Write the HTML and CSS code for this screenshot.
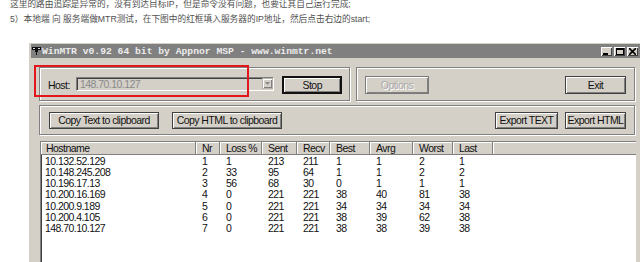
FILE: index.html
```html
<!DOCTYPE html>
<html lang="zh">
<head>
<meta charset="utf-8">
<link rel="stylesheet" href="styles.css">
</head>
<body>
<div class="intro">
  <p class="l1">这里的路由追踪是异常的，没有到达目标IP，但是命令没有问题，也要让其自己运行完成;</p>
  <p class="l2">5）本地端 向 服务端做MTR测试，在下图中的红框填入服务器的IP地址，然后点击右边的start;</p>
</div>
<div class="win">
  <div class="titlebar">
    <svg class="appicon" width="9" height="10" viewBox="0 0 9 10"><path d="M0 1h9v3H6v2H5v3H4V6H3V4H0z" fill="#111"/><path d="M1 2h2v1H1zM6 2h2v1H6z" fill="#ddd"/></svg>
    <span class="title">WinMTR v0.92 64 bit by Appnor MSP - www.winmtr.net</span>
    <div class="tbtns">
      <span class="tbtn"><svg width="7" height="7" viewBox="0 0 7 7"><path d="M0 5h5v2H0z" fill="#000"/></svg></span>
      <span class="tbtn"><svg width="8" height="7" viewBox="0 0 8 7"><path d="M0 0h8v7H0zM1 2v4h6V2z" fill="#000" fill-rule="evenodd"/></svg></span>
      <span class="tbtn close"><svg width="7" height="7" viewBox="0 0 7 7"><path d="M0 0L7 7M7 0L0 7" stroke="#000" stroke-width="1.6"/></svg></span>
    </div>
  </div>
  <div class="client">
    <div class="row1">
      <div class="group g1">
        <span class="hostlbl">Host:</span>
        <div class="combo"><span class="comboval">148.70.10.127</span><span class="arrow"><svg width="5" height="3" viewBox="0 0 5 3"><path d="M0 0h5L2.5 3z" fill="#888"/></svg></span></div>
        <button class="btn default stop">Stop</button>
      </div>
      <div class="group g2">
        <button class="btn disabled opt">Options</button>
        <button class="btn exit">Exit</button>
      </div>
    </div>
    <div class="group g3">
      <button class="btn copyt">Copy Text to clipboard</button>
      <button class="btn copyh">Copy HTML to clipboard</button>
      <span class="spacer"></span>
      <button class="btn expt">Export TEXT</button>
      <button class="btn exph">Export HTML</button>
    </div>
    <div class="list">
      <div class="hdr">
        <span class="hc first">Hostname</span><span class="hc">Nr</span><span class="hc">Loss %</span><span class="hc">Sent</span><span class="hc">Recv</span><span class="hc">Best</span><span class="hc">Avrg</span><span class="hc">Worst</span><span class="hc">Last</span><span class="hc rest"></span>
      </div>
      <div class="rows">
        <div class="r"><span class="first">10.132.52.129</span><span>1</span><span>1</span><span>213</span><span>211</span><span>1</span><span>1</span><span>2</span><span>1</span></div>
        <div class="r"><span class="first">10.148.245.208</span><span>2</span><span>33</span><span>95</span><span>64</span><span>1</span><span>1</span><span>2</span><span>2</span></div>
        <div class="r"><span class="first">10.196.17.13</span><span>3</span><span>56</span><span>68</span><span>30</span><span>0</span><span>1</span><span>1</span><span>1</span></div>
        <div class="r"><span class="first">10.200.16.169</span><span>4</span><span>0</span><span>221</span><span>221</span><span>38</span><span>40</span><span>81</span><span>38</span></div>
        <div class="r"><span class="first">10.200.9.189</span><span>5</span><span>0</span><span>221</span><span>221</span><span>34</span><span>34</span><span>34</span><span>34</span></div>
        <div class="r"><span class="first">10.200.4.105</span><span>6</span><span>0</span><span>221</span><span>221</span><span>38</span><span>39</span><span>62</span><span>38</span></div>
        <div class="r"><span class="first">148.70.10.127</span><span>7</span><span>0</span><span>221</span><span>221</span><span>38</span><span>38</span><span>39</span><span>38</span></div>
      </div>
    </div>
  </div>
  <div class="redmark"></div>
</div>
</body>
</html>
```
FILE: styles.css
```css
* { box-sizing: border-box; }
html, body { margin: 0; padding: 0; background: #fff; overflow: hidden; }
body { width: 640px; height: 262px; font-family: "Liberation Sans", Arial, sans-serif; }

.intro { padding-left: 10px; color: #505050; font-family: "Liberation Sans", "Noto Sans CJK SC", sans-serif; font-size: 8.7px; }
.intro p { margin: 0; line-height: 12px; white-space: nowrap; }
.intro .l1 { margin-top: -2px; }
.intro .l2 { margin-top: 2.5px; }

.win {
  position: relative;
  margin-top: 17.5px;
  margin-left: 28px;
  width: 616px;
  height: 230px;
  background: #d4d0c8;
  padding: 2px 3px 0 3px;
  box-shadow: inset 1px 1px #fff;
  font-size: 10.5px;
  letter-spacing: -0.55px;
  color: #111;
}

.titlebar {
  display: flex;
  align-items: center;
  height: 14px;
  background: #808080;
  padding-left: 1px;
}
.appicon { flex: none; }
.title {
  margin-left: 1px;
  font-family: "Liberation Mono", "DejaVu Sans Mono", monospace;
  font-weight: bold;
  font-size: 9.7px;
  letter-spacing: 0;
  color: #ececec;
  white-space: nowrap;
}
.tbtns { margin-left: auto; margin-right: 3px; display: flex; gap: 2px; }
.tbtn {
  width: 11px; height: 9px;
  background: #d4d0c8;
  display: flex; align-items: center; justify-content: center;
  box-shadow: inset 1px 1px #fff, inset -1px -1px #404040;
}
.tbtn svg { display: block; }

.client { padding: 9px 3px 0 8px; }
.row1 { display: flex; gap: 6px; }

.group {
  height: 34px;
  border: 1px solid #808080;
  box-shadow: inset 1px 1px #fff, 1px 1px #fff;
  display: flex;
  align-items: center;
}
.g1 { width: 311px; padding: 1px 7px 0 8px; }
.g2 { width: 279px; padding: 1px 8px 0 8px; justify-content: space-between; }
.g3 { margin-top: 4px; width: 596px; height: 30px; padding: 0 8px 0 9px; }
.spacer { flex: 1; }

.hostlbl { width: 20px; margin-right: 8px; }
.combo {
  width: 200px; height: 14px;
  display: flex; align-items: center;
  border: 1px solid; border-color: #808080 #fff #fff #808080;
  box-shadow: inset 1px 1px #404040;
  padding-left: 3px;
  margin-right: 8px;
  margin-top: -2px;
}
.comboval { color: #8a8a8a; flex: 1; }
.arrow {
  width: 11px; height: 11px; margin-right: 0;
  display: flex; align-items: center; justify-content: center;
  box-shadow: inset 1px 1px #fff, inset -1px -1px #808080;
  border: 1px solid #b8b4ac;
}

.btn {
  font: inherit;
  letter-spacing: inherit;
  color: #111;
  background: #d4d0c8;
  height: 18px;
  padding: 0;
  border: 1px solid #404040;
  box-shadow: inset 1px 1px #fff, inset -1px -1px #808080;
  display: flex; align-items: center; justify-content: center;
}
.btn.default { border: 2px solid #111; }
.btn.disabled { color: #a8a8a8; text-shadow: 1px 1px #fff; border-color: #7a7a7a; }
.stop { width: 60px; }
.opt { width: 64px; }
.exit { width: 61px; }
.copyt { width: 110px; height: 17px; margin-right: 13px; }
.copyh { width: 110px; height: 17px; }
.expt { width: 63px; height: 17px; margin-right: 7px; }
.exph { width: 61px; height: 17px; }

.list {
  margin: 6px 2px 0 1px;
  height: 130px;
  background: #fff;
  border-top: 1px solid #808080;
  border-left: 1px solid #808080;
  box-shadow: inset 1px 1px #404040;
}
.hdr, .r {
  display: grid;
  grid-template-columns: 155px 24px 42px 35px 33px 40px 43px 40px 40px 1fr;
}
.hdr { height: 13px; }
.hc {
  background: #d4d0c8;
  line-height: 12px;
  padding-left: 6px;
  border-right: 1px solid #808080;
  border-bottom: 1px solid #808080;
  box-shadow: inset 1px 1px #fff;
  white-space: nowrap;
}
.hc.first { padding-left: 5px; }
.hc.rest { border-right: none; }
.rows { padding-top: 0.5px; }
.r span { line-height: 11.33px; padding-left: 6px; white-space: nowrap; }
.r span.first { padding-left: 4px; }

.redmark {
  position: absolute;
  left: 6px; top: 23px;
  width: 215px; height: 32px;
  border: 2px solid #e3161c;
}
```
